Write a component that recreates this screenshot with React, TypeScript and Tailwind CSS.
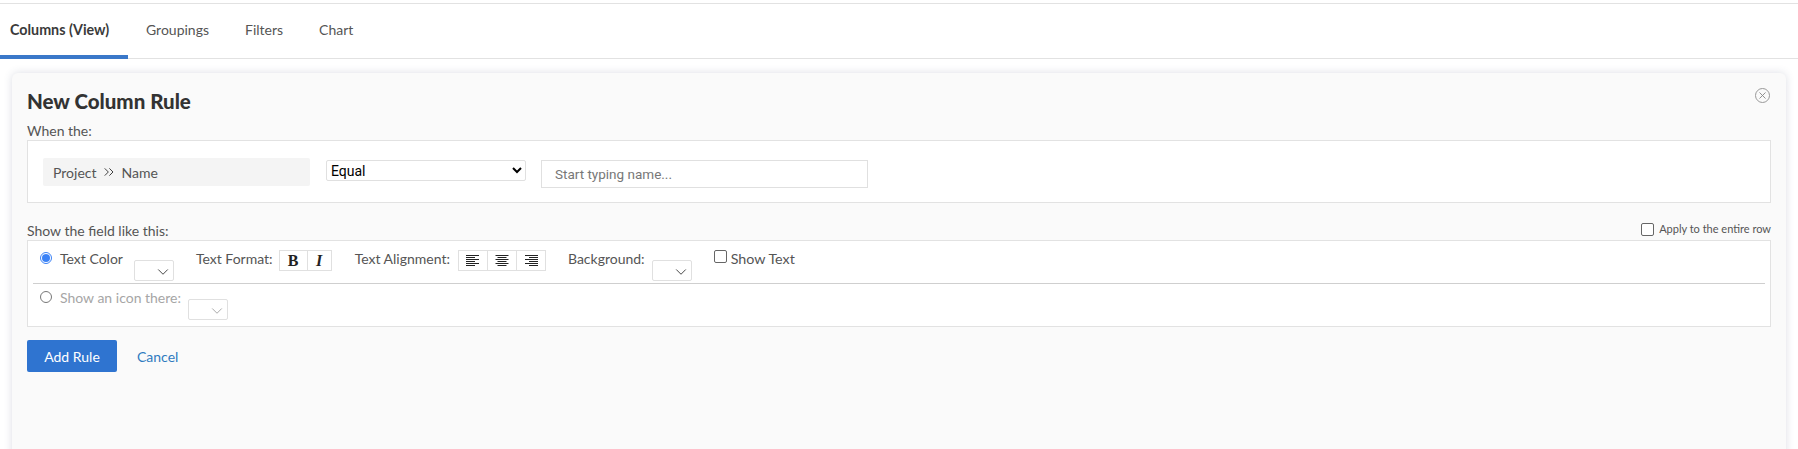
import React from "react";
import { ChevronDown, ChevronsRight, X } from "lucide-react";

const TABS = ["Groupings", "Filters", "Chart"];

const Swatch = ({ muted = false }: { muted?: boolean }) => (
  <div className="flex h-[21px] w-[40px] items-center justify-end rounded-[2px] border border-[#e0e0e0] bg-white pt-[2px] pr-[1px]">
    <ChevronDown className={`h-[18px] w-[18px] ${muted ? "text-[#a8a8a8]" : "text-[#444]"}`} strokeWidth={1.3} />
  </div>
);

const AlignIcon = ({ align }: { align: "left" | "center" | "right" }) => {
  const rows = [13, 9, 13, 9, 13, 9];
  return (
    <svg width="14" height="13" viewBox="0 0 14 13">
      {rows.map((w, i) => {
        const x = align === "left" ? 0 : align === "right" ? 14 - w : (14 - w) / 2;
        return <rect key={i} x={x} y={i * 2 + 1} width={w} height="1" fill="#222" />;
      })}
    </svg>
  );
};

export default function App() {
  return (
    <div className="h-[449px] overflow-hidden bg-white font-['Lato',sans-serif] text-[14px] text-[#555]">
      <div className="mt-[3px] flex h-[56px] border-y border-[#e2e2e2]">
        <div className="-mb-px flex w-[128px] items-center border-b-[4px] border-[#3a78c9] pl-[10px] text-[14.3px] font-bold text-[#3a3a3a]">
          Columns (View)
        </div>
        {TABS.map((tab) => (
          <div key={tab} className="mx-[18px] flex items-center pb-[3px] first:ml-[17px]">
            {tab}
          </div>
        ))}
      </div>

      <div className="mx-[12px] mt-[14px] h-[400px] rounded-t-[6px] bg-[#fafafa] px-[15px] pt-[16px] shadow-[0_0_8px_rgba(60,70,110,0.18)]">
        <div className="flex items-start justify-between">
          <h2 className="text-[20.5px] leading-[24px] font-black text-[#333]">New Column Rule</h2>
          <div className="-mt-[1px] mr-[1px] flex h-[15px] w-[15px] items-center justify-center rounded-full border border-[#999]">
            <X className="h-[11px] w-[11px] text-[#888]" strokeWidth={2} />
          </div>
        </div>

        <div className="mt-[9px] leading-[18px]">When the:</div>
        <div className="flex h-[63px] items-start border border-[#e2e2e2] bg-white pt-[17px] pl-[15px]">
          <div className="flex h-[28px] w-[267px] items-center rounded-[2px] bg-[#f4f4f4] pl-[10px]">
            Project
            <ChevronsRight className="mr-[4px] ml-[5px] h-[16px] w-[16px] text-[#333]" strokeWidth={1.4} />
            Name
          </div>
          <select className="mt-[2px] ml-[16px] h-[21px] w-[200px] rounded-[2px] border border-[#e0e0e0] bg-white font-['Roboto',sans-serif] text-[14px] text-black">
            <option>Equal</option>
          </select>
          <input
            placeholder="Start typing name..."
            className="mt-[2px] ml-[15px] h-[28px] w-[327px] border border-[#e0e0e0] bg-white pl-[13px] font-['Roboto',sans-serif] text-[13.5px] placeholder:text-[#777]"
          />
        </div>

        <div className="mt-[18px] flex items-end justify-between leading-[18px]">
          <span>Show the field like this:</span>
          <label className="mb-[3px] flex items-center gap-[5px] text-[11px] leading-[16px]">
            <span className="h-[13px] w-[13px] rounded-[2px] border border-[#666] bg-white" />
            Apply to the entire row
          </label>
        </div>

        <div className="border border-[#e2e2e2] bg-white px-[5px]">
          <div className="flex h-[43px] items-start border-b border-[#cfcfcf] pt-[7px] pl-[7px]">
            <span className="mt-[4px] flex h-[12px] w-[12px] items-center justify-center rounded-full border border-[#3b82f6]">
              <span className="h-[8px] w-[8px] rounded-full bg-[#3b82f6]" />
            </span>
            <span className="ml-[8px]">Text Color</span>
            <div className="mt-[12px] ml-[11px]"><Swatch /></div>
            <span className="ml-[22px]">Text Format:</span>
            <div className="mt-[2px] ml-[6px] flex h-[21px] border border-[#e0e0e0] font-['Liberation_Serif',serif] text-[16px] text-[#222]">
              <span className="flex w-[28px] items-center justify-center border-r border-[#e0e0e0] font-bold">B</span>
              <span className="flex w-[23px] items-center justify-center font-bold italic">I</span>
            </div>
            <span className="ml-[23px]">Text Alignment:</span>
            <div className="mt-[2px] ml-[8px] flex h-[21px] border border-[#e0e0e0]">
              <span className="flex w-[29px] items-center justify-center border-r border-[#e0e0e0]"><AlignIcon align="left" /></span>
              <span className="flex w-[29px] items-center justify-center border-r border-[#e0e0e0]"><AlignIcon align="center" /></span>
              <span className="flex w-[28px] items-center justify-center"><AlignIcon align="right" /></span>
            </div>
            <span className="ml-[22px]">Background:</span>
            <div className="mt-[12px] ml-[7px]"><Swatch /></div>
            <span className="mt-[2px] ml-[22px] h-[13px] w-[13px] rounded-[2px] border border-[#666] bg-white" />
            <span className="ml-[4px] text-[14.3px]">Show Text</span>
          </div>
          <div className="flex h-[42px] items-start pt-[3px] pl-[7px] text-[#a6a6a6]">
            <span className="mt-[4px] h-[12px] w-[12px] rounded-full border border-[#777] bg-white" />
            <span className="ml-[8px]">Show an icon there:</span>
            <div className="mt-[12px] ml-[7px]"><Swatch muted /></div>
          </div>
        </div>

        <div className="mt-[13px] flex items-center">
          <button className="h-[32px] w-[90px] rounded-[2px] bg-[#2f74d0] text-[14px] text-white">Add Rule</button>
          <a className="ml-[20px] text-[#2f7ac0]">Cancel</a>
        </div>
      </div>
    </div>
  );
}
